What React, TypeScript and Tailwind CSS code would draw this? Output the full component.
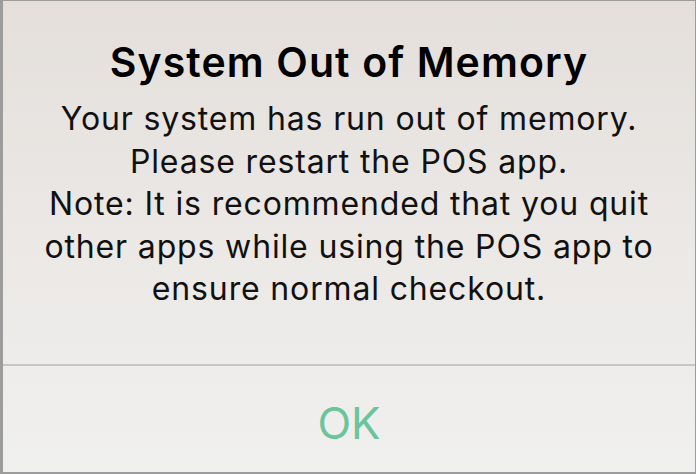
export default function App() {
  return (
    <div className="w-[696px] h-[474px] bg-[#9c9c9c] pl-[3px] pr-[1px] pt-[1px] pb-[2px]">
      <div
        className="h-full flex flex-col bg-gradient-to-b from-[#e4dfdb] via-[#ebe8e5] to-[#f0f0ef] text-black"
        style={{ fontFamily: 'Inter, "Liberation Sans", sans-serif' }}
      >
        <div className="h-[363px] flex flex-col items-center pt-[35px] text-center">
          <h1 className="text-[41px] leading-[52px] font-semibold tracking-[1.1px]">
            System Out of Memory
          </h1>
          <p className="mt-[10px] text-[32px] leading-[42.5px] font-normal tracking-[0.85px] text-[#111]">
            Your system has run out of memory.
            <br />
            Please restart the POS app.
            <br />
            Note: It is recommended that you quit
            <br />
            other apps while using the POS app to
            <br />
            ensure normal checkout.
          </p>
        </div>
        <div className="h-[2px] bg-[#c6c6c6]" />
        <div className="flex-1 flex items-center justify-center pt-[8px]">
          <span className="text-[44px] leading-none text-[#6cc59a]">OK</span>
        </div>
      </div>
    </div>
  );
}
